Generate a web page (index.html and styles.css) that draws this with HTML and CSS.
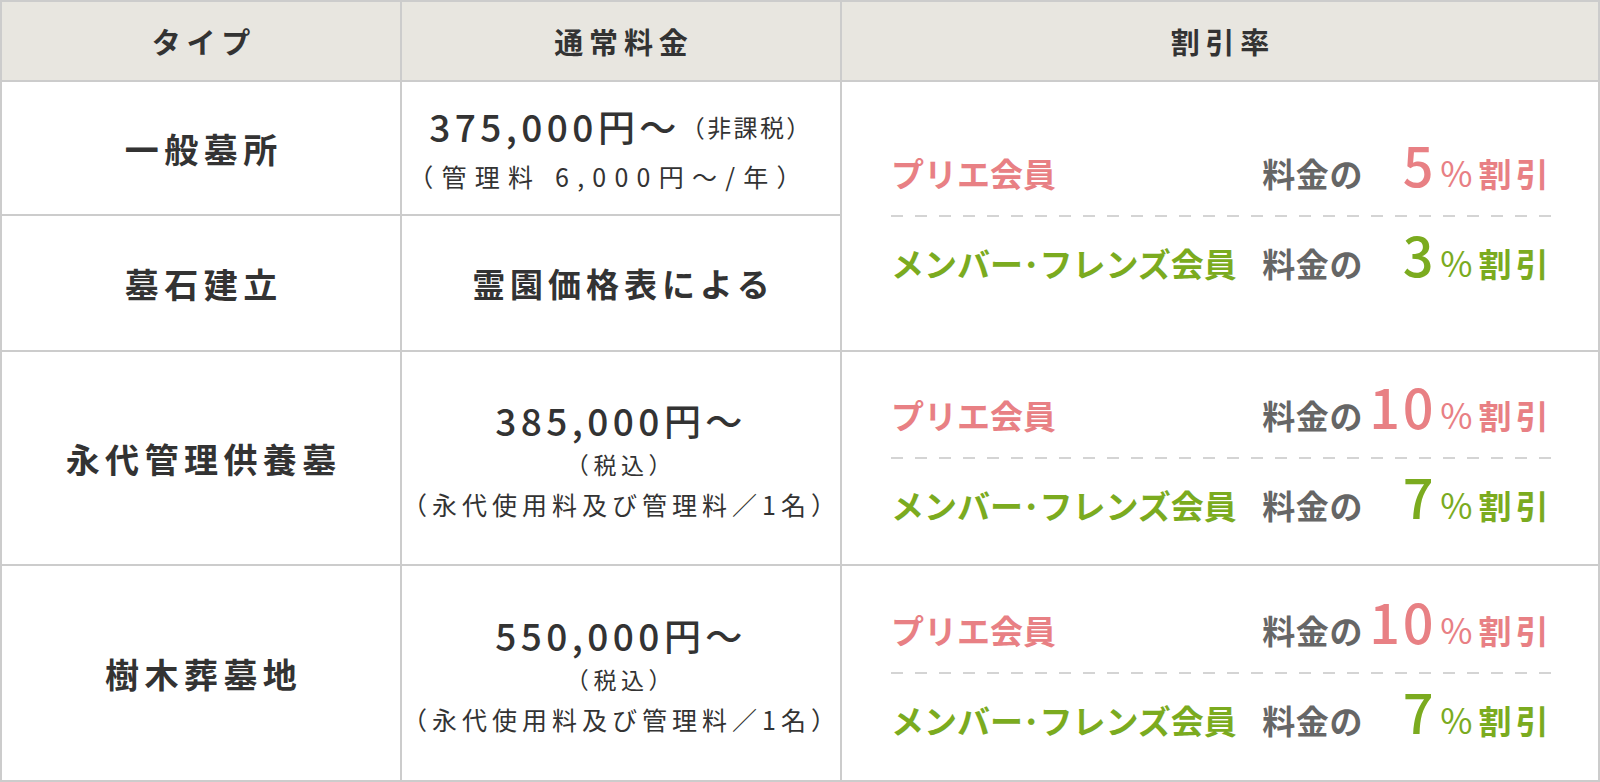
FILE: index.html
```html
<!DOCTYPE html>
<html lang="ja">
<head>
<meta charset="utf-8">
<title>料金表</title>
<link rel="stylesheet" href="styles.css">
</head>
<body>
<div class="table">
  <div class="cell head">タイプ</div>
  <div class="cell head">通常料金</div>
  <div class="cell head">割引率</div>

  <div class="cell type">一般墓所</div>
  <div class="cell price first">
    <p class="big">375,000円～<span class="tax">（非課税）</span></p>
    <p class="small wide">（管理料 6,000円～/年）</p>
  </div>
  <div class="cell disc span2">
    <div class="list">
      <div class="item pink"><span class="label">プリエ会員</span><span class="of">料金の</span><span class="num">5</span><span class="sign">%</span><span class="pct">割引</span></div>
      <div class="rule"></div>
      <div class="item green"><span class="label">メンバー･フレンズ会員</span><span class="of">料金の</span><span class="num">3</span><span class="sign">%</span><span class="pct">割引</span></div>
    </div>
  </div>

  <div class="cell type">墓石建立</div>
  <div class="cell price"><p class="plain">霊園価格表による</p></div>

  <div class="cell type">永代管理供養墓</div>
  <div class="cell price">
    <p class="big">385,000円～</p>
    <p class="tiny">（税込）</p>
    <p class="small">（永代使用料及び管理料／1名）</p>
  </div>
  <div class="cell disc">
    <div class="list">
      <div class="item pink"><span class="label">プリエ会員</span><span class="of">料金の</span><span class="num">10</span><span class="sign">%</span><span class="pct">割引</span></div>
      <div class="rule"></div>
      <div class="item green"><span class="label">メンバー･フレンズ会員</span><span class="of">料金の</span><span class="num">7</span><span class="sign">%</span><span class="pct">割引</span></div>
    </div>
  </div>

  <div class="cell type">樹木葬墓地</div>
  <div class="cell price">
    <p class="big">550,000円～</p>
    <p class="tiny">（税込）</p>
    <p class="small">（永代使用料及び管理料／1名）</p>
  </div>
  <div class="cell disc">
    <div class="list">
      <div class="item pink"><span class="label">プリエ会員</span><span class="of">料金の</span><span class="num">10</span><span class="sign">%</span><span class="pct">割引</span></div>
      <div class="rule"></div>
      <div class="item green"><span class="label">メンバー･フレンズ会員</span><span class="of">料金の</span><span class="num">7</span><span class="sign">%</span><span class="pct">割引</span></div>
    </div>
  </div>
</div>
</body>
</html>
```

FILE: styles.css
```css
html, body {
  margin: 0;
  padding: 0;
  background: #ffffff;
}
body {
  font-family: "Noto Sans CJK JP", "Noto Sans", sans-serif;
  color: #333333;
}
p { margin: 0; }

.table {
  width: 1600px;
  box-sizing: border-box;
  display: grid;
  grid-template-columns: 398px 438px 756px;
  grid-template-rows: 78px 132px 134px 212px 214px;
  gap: 2px;
  padding: 2px;
  background: #cccccc;
}

.cell {
  background: #ffffff;
  display: flex;
  flex-direction: column;
  align-items: center;
  justify-content: center;
  text-align: center;
}

.head {
  background: #e8e6e0;
  font-size: 29px;
  font-weight: 700;
  letter-spacing: 0.2em;
  padding-left: 0.2em;
  color: #333333;
}

.type {
  font-size: 34px;
  font-weight: 700;
  letter-spacing: 0.16em;
  padding-left: 0.16em;
  color: #333333;
}

.price {
  color: #333333;
  padding-top: 4px;
  box-sizing: border-box;
}
.big {
  font-size: 37px;
  font-weight: 500;
  letter-spacing: 0.12em;
  line-height: 48px;
}
.first .big { line-height: 46px; }
.first .small { line-height: 42px; }
.tax {
  font-size: 24px;
  font-weight: 400;
  letter-spacing: 0.1em;
  position: relative;
  top: -5px;
}
.small {
  font-size: 25px;
  font-weight: 400;
  letter-spacing: 0.2em;
  line-height: 40px;
}
.small.wide {
  letter-spacing: 0.33em;
  padding-right: 24px;
}
.tiny {
  font-size: 23px;
  font-weight: 400;
  letter-spacing: 0.2em;
  line-height: 40px;
}
.plain {
  font-size: 33px;
  font-weight: 700;
  letter-spacing: 0.15em;
  padding-left: 0.15em;
  position: relative;
  top: -2px;
}

.span2 { grid-row: 2 / span 2; grid-column: 3; }

.disc { align-items: stretch; }
.list {
  padding: 0 45px 0 49px;
}
.item {
  height: 76px;
  padding-top: 12px;
  display: flex;
  align-items: baseline;
}
.rule {
  height: 2px;
  background: repeating-linear-gradient(to right, #d4d4d4 0, #d4d4d4 12px, transparent 12px, transparent 24px);
}
.label {
  flex: 1;
  text-align: left;
  font-size: 33px;
  font-weight: 700;
  letter-spacing: 0;
  line-height: 50px;
}
.of {
  font-size: 33px;
  font-weight: 700;
  color: #666666;
  letter-spacing: 0.02em;
  line-height: 50px;
}
.num {
  width: 77px;
  text-align: right;
  font-size: 54px;
  font-weight: 500;
  letter-spacing: 0.05em;
  line-height: 50px;
  padding-right: 4px;
  box-sizing: border-box;
}
.sign {
  font-size: 35px;
  font-weight: 400;
  line-height: 50px;
  padding-right: 6px;
}
.pct {
  font-size: 33px;
  font-weight: 700;
  letter-spacing: 0.13em;
  line-height: 50px;
}
.pink { color: #e88084; }
.green { color: #7bab1f; }
```
